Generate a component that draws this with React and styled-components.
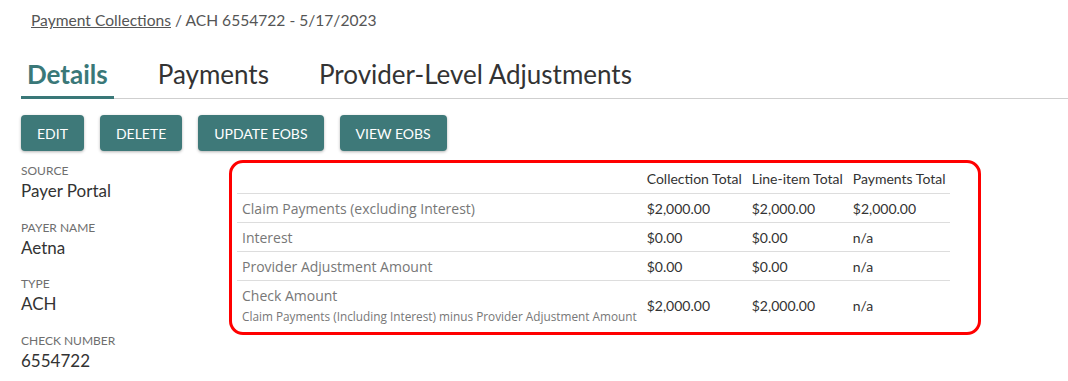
import styled, { createGlobalStyle } from "styled-components";

const GlobalStyle = createGlobalStyle`
  body {
    margin: 0;
    background: #ffffff;
    font-family: Lato, "Open Sans", sans-serif;
    color: #333333;
  }
`;

const Page = styled.div`
  padding: 11px 0 0 21px;
`;

const Breadcrumb = styled.div`
  padding-left: 10px;
  font-size: 15.6px;
  color: #555555;
  line-height: 18px;
`;

const Crumb = styled.a`
  color: #555555;
  text-decoration: underline;
`;

const Tabs = styled.div`
  display: flex;
  gap: 38px;
  margin-top: 29px;
  border-bottom: 1px solid #cfcfcf;
`;

const Tab = styled.div`
  padding: 0 6px 6px;
  font-size: 26px;
  line-height: 32px;
  color: ${(props) => (props.active ? "#3a7878" : "#333333")};
  font-weight: ${(props) => (props.active ? 700 : 400)};
  border-bottom: 3px solid ${(props) => (props.active ? "#3a7878" : "transparent")};
  margin-bottom: -1px;
`;

const Toolbar = styled.div`
  display: flex;
  gap: 16px;
  margin-top: 16px;
`;

const Button = styled.button`
  height: 36px;
  padding: 0 16px;
  border: none;
  border-radius: 4px;
  background: #3e7979;
  color: #ffffff;
  font-family: Lato, sans-serif;
  font-size: 14px;
  text-transform: uppercase;
  box-shadow: 0 1px 3px rgba(0, 0, 0, 0.3);
`;

const Content = styled.div`
  display: flex;
  margin-top: 9px;
`;

const Fields = styled.div`
  width: 208px;
  padding-top: 3px;
`;

const Field = styled.div`
  margin-bottom: 16.7px;
`;

const Label = styled.div`
  font-size: 12px;
  line-height: 15px;
  color: #6e6e6e;
  text-transform: uppercase;
`;

const Value = styled.div`
  font-size: 17px;
  line-height: 25px;
  color: #333333;
`;

const Highlight = styled.div`
  align-self: flex-start;
  border: 3px solid #ff0000;
  border-radius: 14px;
  padding: 0 28px 0 5px;
`;

const Table = styled.table`
  border-collapse: collapse;
  font-size: 14px;
`;

const Th = styled.th`
  text-align: left;
  font-weight: 400;
  padding: 0 5px;
  height: 30px;
  color: #333333;
  white-space: nowrap;
  border-bottom: 1px solid #dddddd;
`;

const Td = styled.td`
  padding: ${(props) => (props.last ? "4px 5px 7px" : "0 5px")};
  height: 28px;
  white-space: nowrap;
  color: ${(props) => (props.label ? "#777777" : "#333333")};
  font-family: ${(props) => (props.label ? '"Open Sans", sans-serif' : "Lato, sans-serif")};
  border-bottom: ${(props) => (props.last ? "none" : "1px solid #dddddd")};
`;

const Main = styled.div`
  line-height: 22px;
`;

const Sub = styled.div`
  font-size: 11.8px;
  line-height: 18px;
  color: #777777;
`;

const rows = [
  { label: "Claim Payments (excluding Interest)", c: "$2,000.00", l: "$2,000.00", p: "$2,000.00" },
  { label: "Interest", c: "$0.00", l: "$0.00", p: "n/a" },
  { label: "Provider Adjustment Amount", c: "$0.00", l: "$0.00", p: "n/a" },
];

function App() {
  return (
    <Page>
      <GlobalStyle />
      <Breadcrumb>
        <Crumb>Payment Collections</Crumb> / ACH 6554722 - 5/17/2023
      </Breadcrumb>
      <Tabs>
        <Tab active>Details</Tab>
        <Tab>Payments</Tab>
        <Tab>Provider-Level Adjustments</Tab>
      </Tabs>
      <Toolbar>
        <Button>Edit</Button>
        <Button>Delete</Button>
        <Button>Update EOBs</Button>
        <Button>View EOBs</Button>
      </Toolbar>
      <Content>
        <Fields>
          <Field>
            <Label>Source</Label>
            <Value>Payer Portal</Value>
          </Field>
          <Field>
            <Label>Payer Name</Label>
            <Value>Aetna</Value>
          </Field>
          <Field>
            <Label>Type</Label>
            <Value>ACH</Value>
          </Field>
          <Field>
            <Label>Check Number</Label>
            <Value>6554722</Value>
          </Field>
        </Fields>
        <Highlight>
          <Table>
            <thead>
              <tr>
                <Th />
                <Th>Collection Total</Th>
                <Th>Line-item Total</Th>
                <Th>Payments Total</Th>
              </tr>
            </thead>
            <tbody>
              {rows.map((row) => (
                <tr key={row.label}>
                  <Td label>{row.label}</Td>
                  <Td>{row.c}</Td>
                  <Td>{row.l}</Td>
                  <Td>{row.p}</Td>
                </tr>
              ))}
              <tr>
                <Td label last>
                  <Main>Check Amount</Main>
                  <Sub>Claim Payments (Including Interest) minus Provider Adjustment Amount</Sub>
                </Td>
                <Td last>$2,000.00</Td>
                <Td last>$2,000.00</Td>
                <Td last>n/a</Td>
              </tr>
            </tbody>
          </Table>
        </Highlight>
      </Content>
    </Page>
  );
}

export default App;
